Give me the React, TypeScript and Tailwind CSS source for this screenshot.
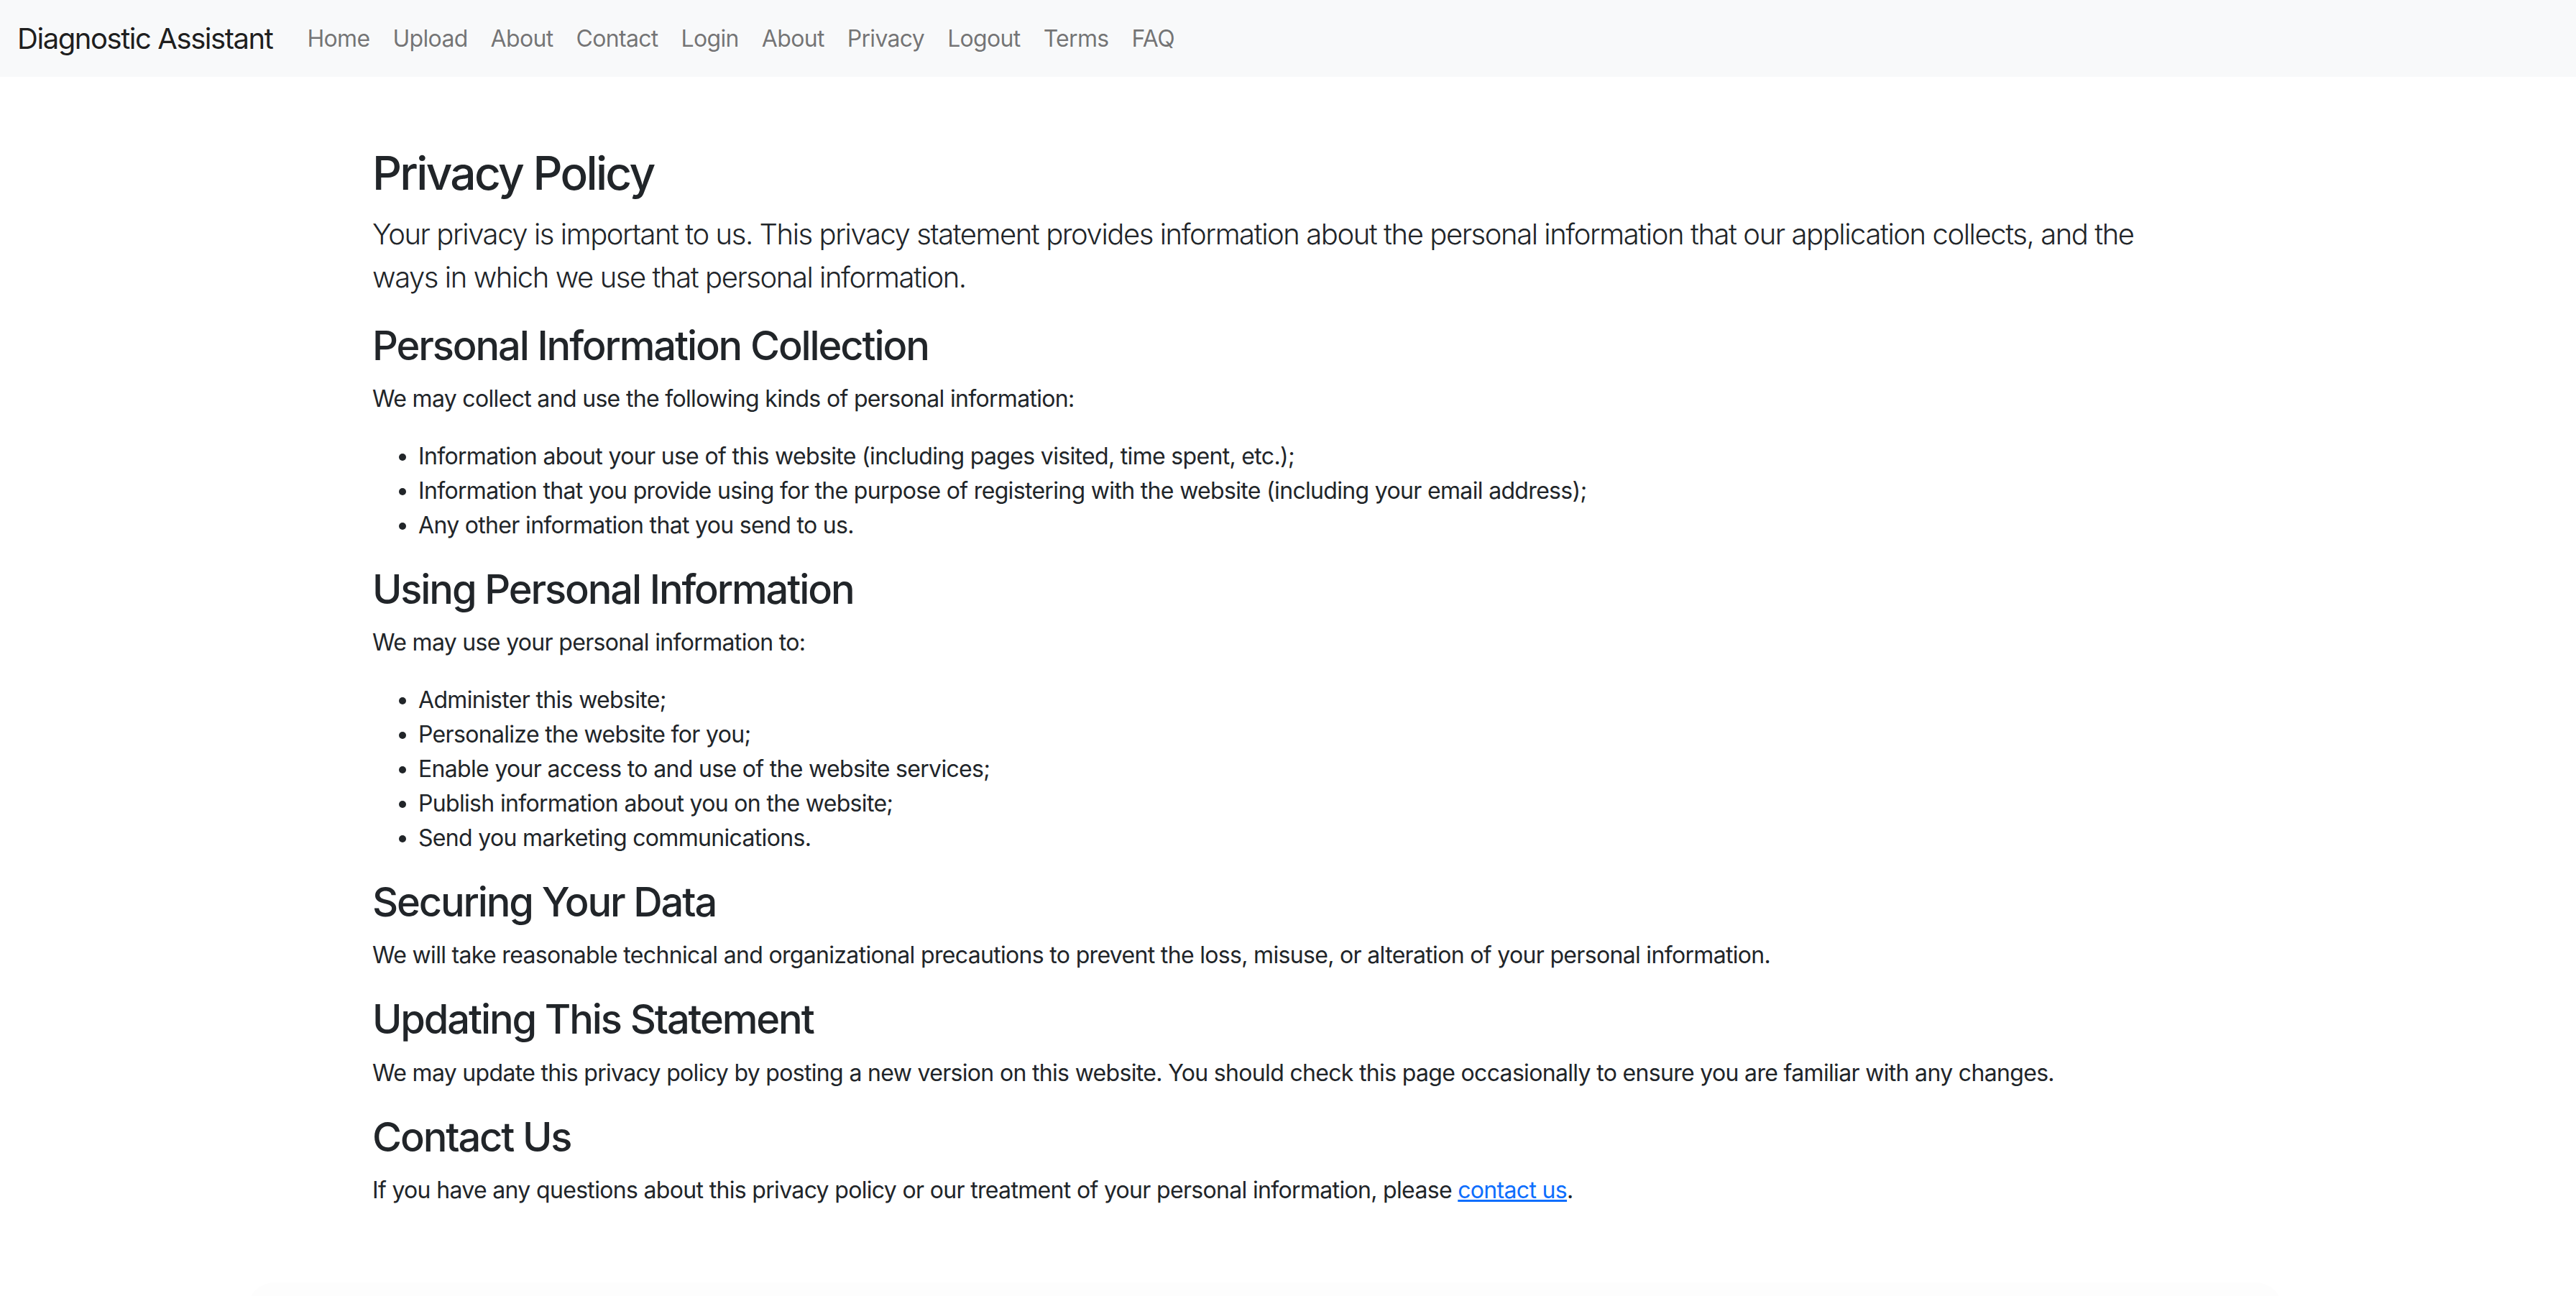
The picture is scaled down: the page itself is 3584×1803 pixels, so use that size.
const navLinks = [
  "Home",
  "Upload",
  "About",
  "Contact",
  "Login",
  "About",
  "Privacy",
  "Logout",
  "Terms",
  "FAQ",
];

const collected = [
  "Information about your use of this website (including pages visited, time spent, etc.);",
  "Information that you provide using for the purpose of registering with the website (including your email address);",
  "Any other information that you send to us.",
];

const uses = [
  "Administer this website;",
  "Personalize the website for you;",
  "Enable your access to and use of the website services;",
  "Publish information about you on the website;",
  "Send you marketing communications.",
];

const Heading = ({ children }: { children: React.ReactNode }) => (
  <h3 className="text-[56px] leading-[1.2] font-medium mb-4 tracking-[-0.038em]">
    {children}
  </h3>
);

const BulletList = ({ items }: { items: string[] }) => (
  <ul className="list-disc pl-16 mb-8">
    {items.map((item) => (
      <li key={item}>{item}</li>
    ))}
  </ul>
);

export default function App() {
  return (
    <div className="min-h-screen bg-white text-[#212529] font-['Inter','Liberation_Sans',sans-serif] text-[32px] leading-[48px] tracking-[-0.021em]">
      {/* Navbar */}
      <nav className="h-[107px] bg-[#f8f9fa] flex items-center px-6">
        <a className="text-[40px] leading-[60px] text-black/90 mr-8 tracking-[-0.036em]">
          Diagnostic Assistant
        </a>
        <ul className="flex items-center">
          {navLinks.map((link, i) => (
            <li key={i}>
              <a className="px-4 text-black/55">{link}</a>
            </li>
          ))}
        </ul>
      </nav>

      {/* Main content */}
      <main className="mx-[518px] mt-24">
        <h2 className="text-[64px] leading-[1.2] font-medium mb-4 tracking-[-0.042em]">
          Privacy Policy
        </h2>
        <p className="text-[40px] leading-[60px] font-light mb-8 tracking-[-0.036em]">
          Your privacy is important to us. This privacy statement provides
          information about the personal information that our application
          collects, and the ways in which we use that personal information.
        </p>

        <Heading>Personal Information Collection</Heading>
        <p className="mb-8">
          We may collect and use the following kinds of personal information:
        </p>
        <BulletList items={collected} />

        <Heading>Using Personal Information</Heading>
        <p className="mb-8">We may use your personal information to:</p>
        <BulletList items={uses} />

        <Heading>Securing Your Data</Heading>
        <p className="mb-8">
          We will take reasonable technical and organizational precautions to
          prevent the loss, misuse, or alteration of your personal information.
        </p>

        <Heading>Updating This Statement</Heading>
        <p className="mb-8">
          We may update this privacy policy by posting a new version on this
          website. You should check this page occasionally to ensure you are
          familiar with any changes.
        </p>

        <Heading>Contact Us</Heading>
        <p className="mb-8">
          If you have any questions about this privacy policy or our treatment
          of your personal information, please{" "}
          <a href="#" className="text-[#0d6efd] underline">
            contact us
          </a>
          .
        </p>
      </main>

      {/* Footer (mostly below the fold) */}
      <footer className="ml-[343px] mr-[407px] mt-[104px] h-24 rounded-t-[40px] bg-[#fdfdfd]" />
    </div>
  );
}
